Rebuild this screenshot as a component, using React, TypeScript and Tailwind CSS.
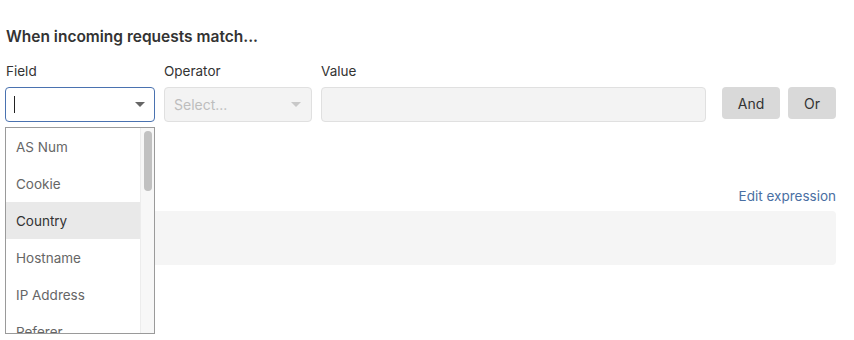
import React from "react";

const items = ["AS Num", "Cookie", "Country", "Hostname", "IP Address", "Referer"];

function Caret({ color }: { color: string }) {
  return (
    <svg width="10" height="5" viewBox="0 0 10 5" className="shrink-0">
      <path d="M0 0 L10 0 L5 5 Z" fill={color} />
    </svg>
  );
}

export default function App() {
  return (
    <div
      className="relative w-[854px] h-[340px] bg-white pl-[5px] pr-[18px] pt-[27px] text-[#333]"
      style={{ fontFamily: "Inter, 'Noto Sans', sans-serif" }}
    >
      <div className="pl-[1px] text-[15.5px] leading-[20px] font-semibold text-[#333]">
        When incoming requests match...
      </div>
      <div className="mt-[14px] flex">
        <div className="w-[150px]">
          <div className="pl-[1px] text-[13.5px] leading-[20px] text-[#333]">Field</div>
          <div className="mt-[6px] h-[35px] rounded-[4px] border border-[#4a72b0] flex items-center pl-[8px] pr-[9px]">
            <div className="w-[1px] h-[17px] bg-[#222]" />
            <div className="flex-1" />
            <Caret color="#666" />
          </div>
        </div>
        <div className="ml-[9px] w-[148px]">
          <div className="text-[13.5px] leading-[20px] text-[#333]">Operator</div>
          <div className="mt-[6px] h-[35px] rounded-[4px] border border-[#e0e0e0] bg-[#f3f3f3] flex items-center pl-[9px] pr-[10px]">
            <span className="flex-1 text-[14px] text-[#bdbdbd]">Select...</span>
            <Caret color="#c8c8c8" />
          </div>
        </div>
        <div className="ml-[9px] w-[385px]">
          <div className="text-[13.5px] leading-[20px] text-[#333]">Value</div>
          <div className="mt-[6px] h-[35px] rounded-[4px] border border-[#e0e0e0] bg-[#f3f3f3]" />
        </div>
        <div className="ml-[16px] flex items-end gap-[8px] pb-[3px]">
          <button className="w-[58px] h-[32px] rounded-[4px] bg-[#d9d9d9] text-[14px] text-[#333]">And</button>
          <button className="w-[48px] h-[32px] rounded-[4px] bg-[#d9d9d9] text-[14px] text-[#333]">Or</button>
        </div>
      </div>
      <div className="mt-[64px] flex justify-end">
        <span className="text-[13.5px] leading-[20px] text-[#4a6fa3]">Edit expression</span>
      </div>
      <div className="mt-[5px] h-[54px] rounded-[4px] bg-[#f5f5f5]" />

      <div className="absolute left-[5px] top-[127px] w-[150px] h-[207px] border border-[#9a9a9a] bg-white overflow-hidden flex">
        <div className="flex-1 overflow-hidden">
          {items.map((it) => (
            <div
              key={it}
              className={
                "h-[37px] flex items-center pl-[10px] pt-[2px] text-[13.5px] " +
                (it === "Country" ? "bg-[#e9e9e9] text-[#333]" : "text-[#666]")
              }
            >
              {it}
            </div>
          ))}
        </div>
        <div className="w-[14px] bg-[#f7f7f7] border-l border-[#ececec] pt-[3px] flex justify-center">
          <div className="w-[8px] h-[60px] rounded-full bg-[#c1c1c1]" />
        </div>
      </div>
    </div>
  );
}
